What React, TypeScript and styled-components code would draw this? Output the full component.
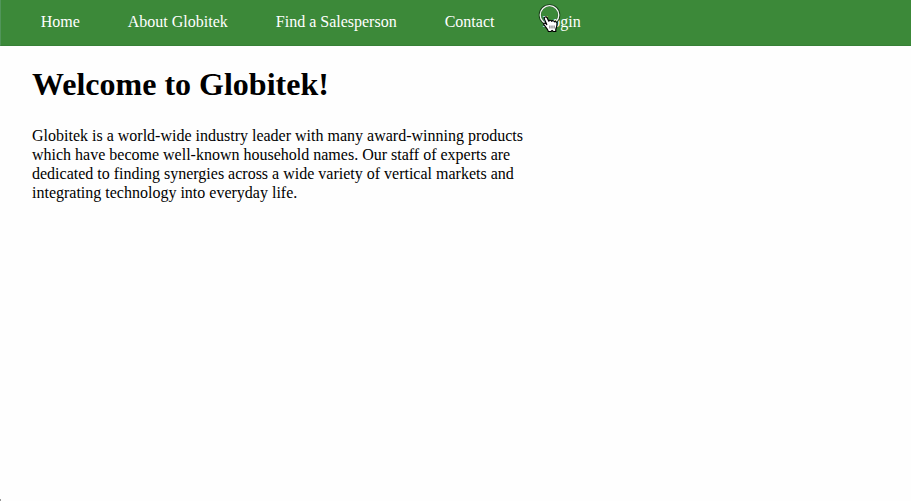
import React from "react";
import styled, { createGlobalStyle } from "styled-components";

const GlobalStyle = createGlobalStyle`
  body {
    margin: 0;
    background: #fefefe;
    color: #000;
    font-family: "Liberation Serif", "Times New Roman", serif;
    font-size: 16px;
    line-height: 19px;
  }
`;

const Page = styled.div`
  position: relative;
  height: 501px;
  overflow: hidden;
`;

const NavBar = styled.nav`
  box-sizing: border-box;
  height: 46px;
  background: #3c8939;
  border-left: 1px solid #51955a;
  border-bottom: 1px solid #378037;
`;

const NavList = styled.ul`
  display: flex;
  gap: 48px;
  margin: 0;
  padding: 12px 0 0 39.7px;
  list-style: none;
`;

const NavLink = styled.a`
  color: #fff;
  text-decoration: none;
  white-space: nowrap;
`;

const Content = styled.main`
  width: 500px;
  padding: 20px 32px 0;
`;

const Title = styled.h1`
  margin: 0;
  font-size: 32px;
  line-height: 37px;
  white-space: nowrap;
`;

const Intro = styled.p`
  margin: 23px 0 0;
`;

const Pointer = styled.svg`
  position: absolute;
  left: 537px;
  top: 2px;
  pointer-events: none;
`;

const StatusEdge = styled.div`
  position: absolute;
  left: 0;
  bottom: 0;
  width: 1px;
  height: 2px;
  background: #999;
`;

const links = ["Home", "About Globitek", "Find a Salesperson", "Contact", "Login"];

export default function App() {
  return (
    <Page>
      <GlobalStyle />
      <NavBar>
        <NavList>
          {links.map((label) => (
            <li key={label}>
              <NavLink href="#">{label}</NavLink>
            </li>
          ))}
        </NavList>
      </NavBar>
      <Content>
        <Title>Welcome to Globitek!</Title>
        <Intro>
          Globitek is a world-wide industry leader with many award-winning products which have
          become well-known household names. Our staff of experts are dedicated to finding
          synergies across a wide variety of vertical markets and integrating technology into
          everyday life.
        </Intro>
      </Content>
      <Pointer width="26" height="32" viewBox="0 0 26 32" fill="none">
        <circle cx="12.5" cy="13" r="9.6" stroke="#183c18" strokeWidth="2.4" />
        <circle cx="12.5" cy="13" r="9.3" stroke="#f4f8f4" strokeWidth="1.3" />
        <path
          d="M9.8 22.5 7.4 17.2C6.6 15.2 9.2 13.9 10.2 15.9L11.8 19.2C12.2 17.9 14.1 18 14.6 19.3C15.3 18.3 17 18.6 17.4 19.9C18.4 19.1 20 19.8 20 21.3C20.1 24.3 19.3 25.6 18.8 27.2V29.5H16.2L15.1 28.4L14 29.5H11.4C11.2 27.4 8.5 25 7 22.9C6 21.2 7.8 20.3 9.8 22.5Z"
          fill="#fff"
          stroke="#000"
          strokeWidth="1.2"
          strokeLinejoin="round"
        />
        <path d="M12.9 23.5V26.5M15 23.5V26.5M17.1 23.5V26.5" stroke="#222" strokeWidth="0.7" />
      </Pointer>
      <StatusEdge />
    </Page>
  );
}
